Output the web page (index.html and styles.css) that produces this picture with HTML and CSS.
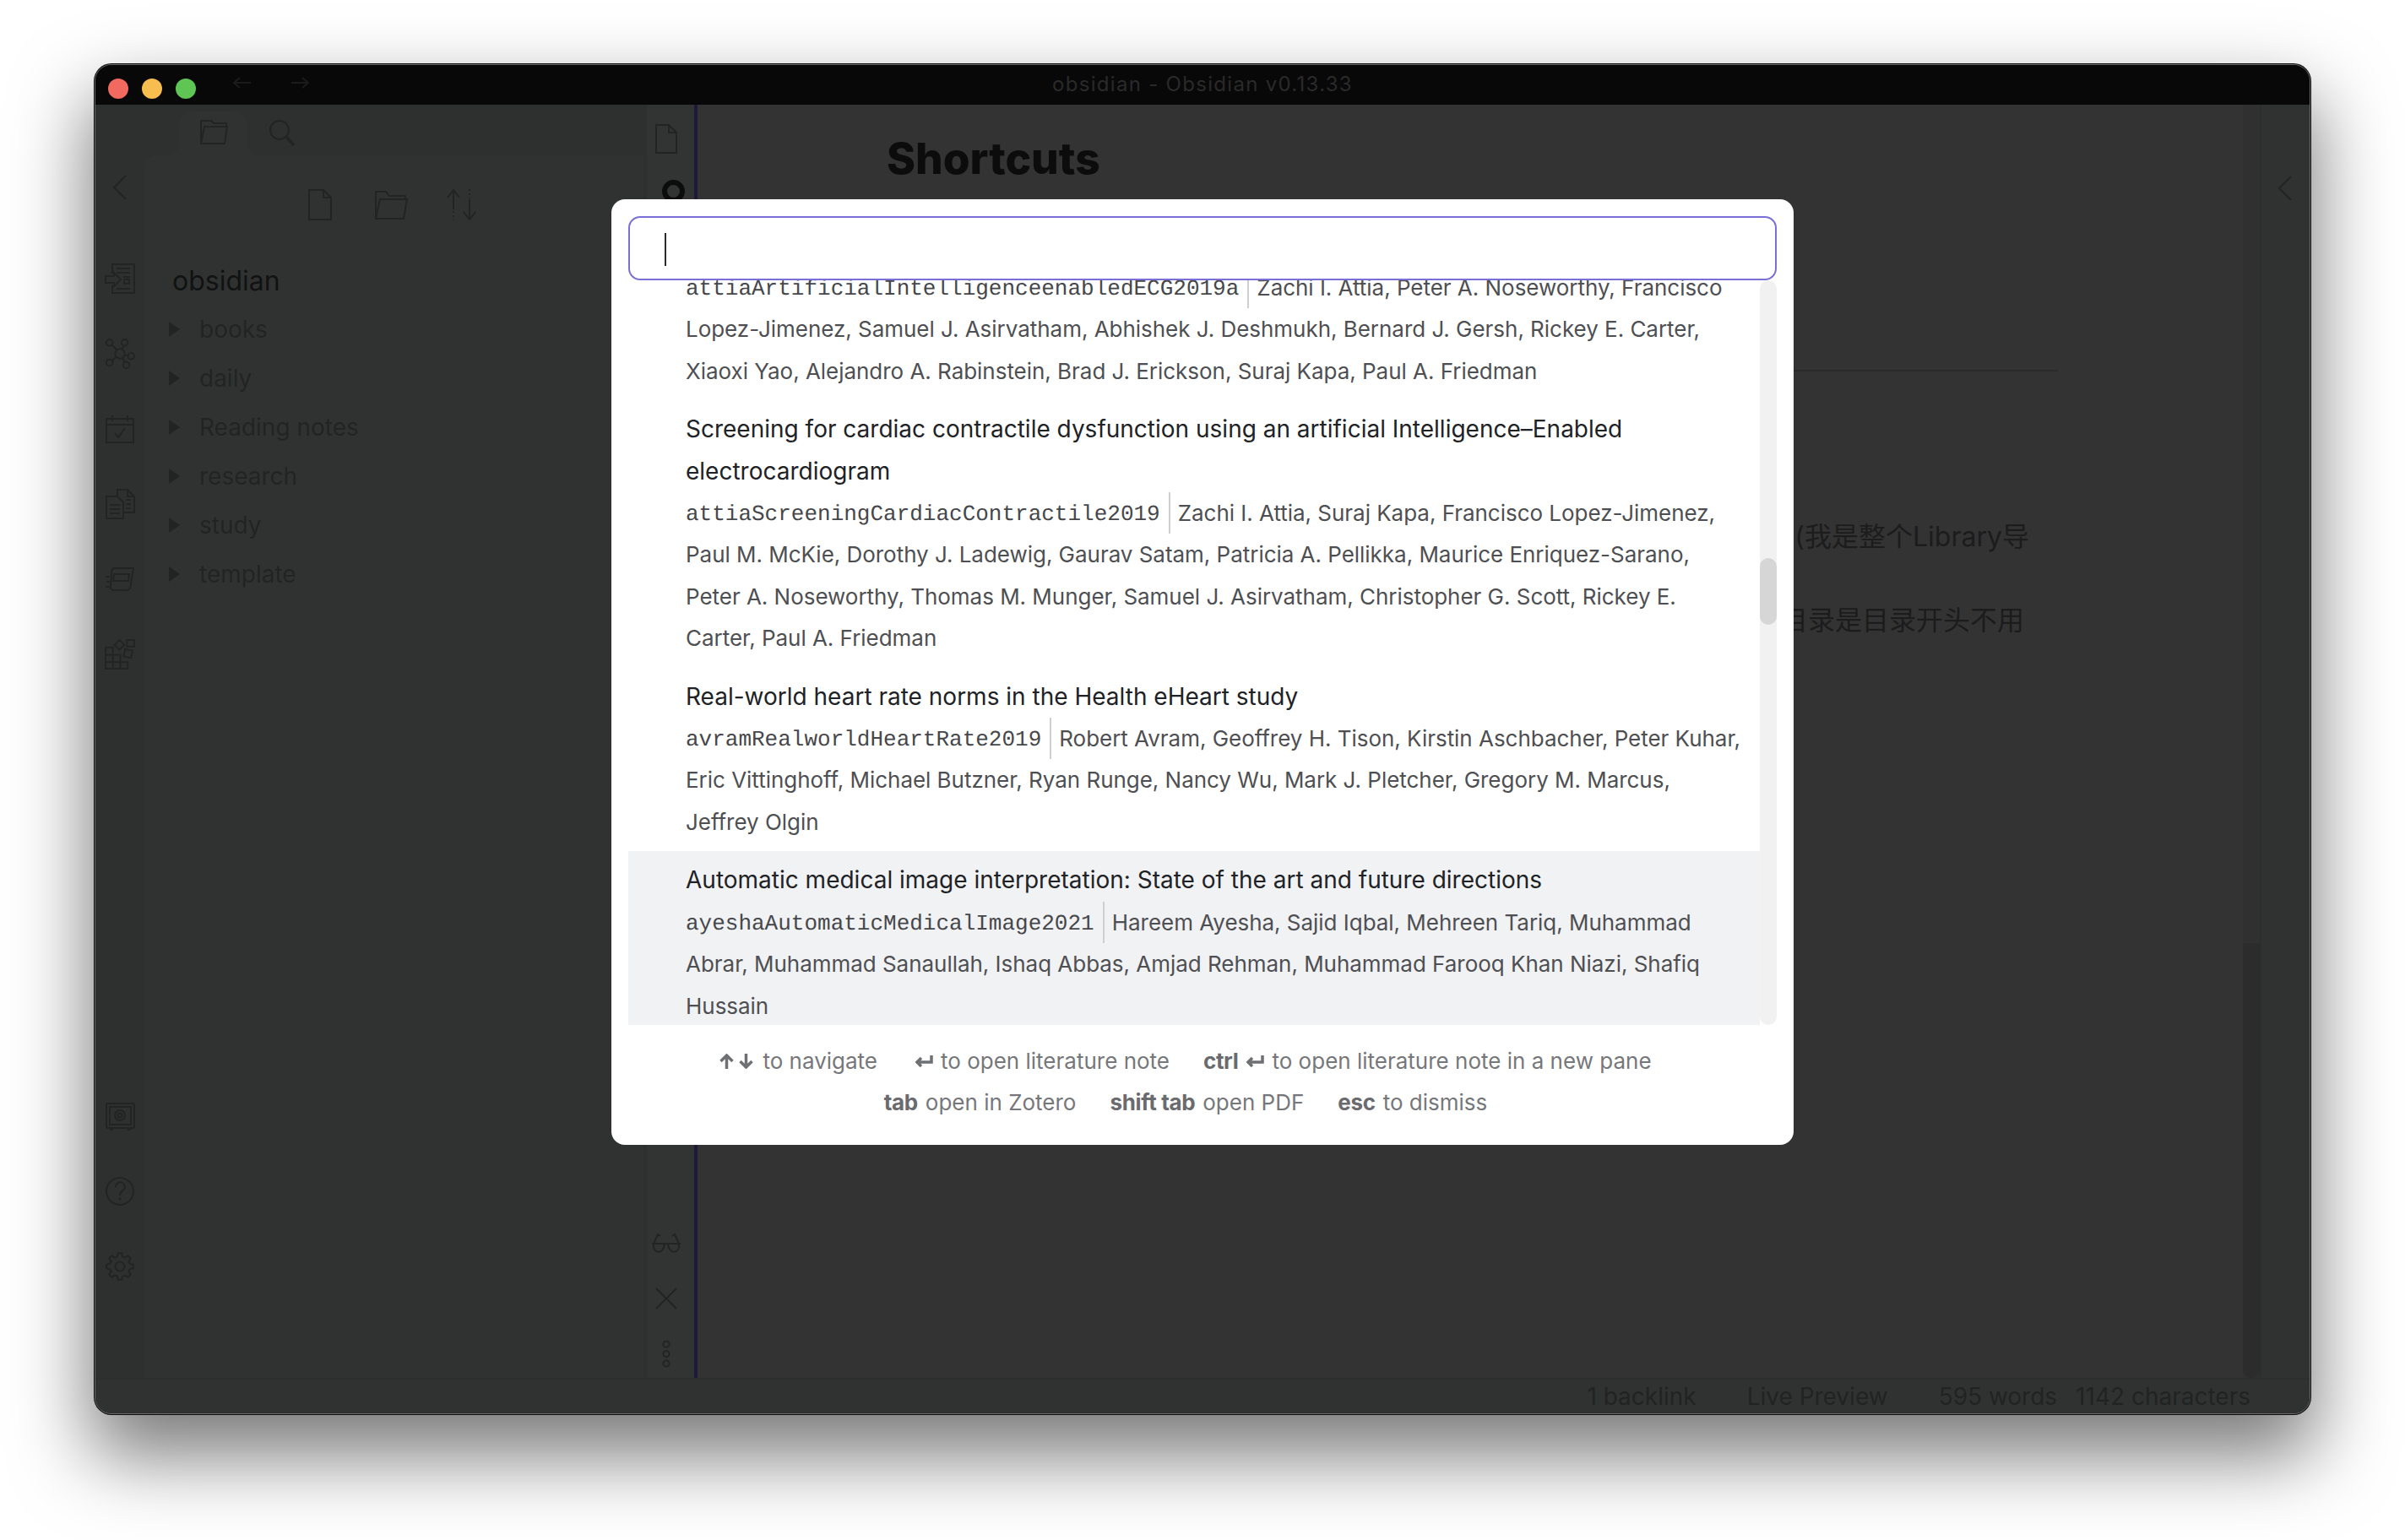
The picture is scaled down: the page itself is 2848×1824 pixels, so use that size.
FILE: index.html
```html
<!DOCTYPE html>
<html lang="en">
<head>
<meta charset="utf-8">
<title>obsidian - Obsidian v0.13.33</title>
<link rel="stylesheet" href="styles.css">
</head>
<body>
<div class="desktop">
<div class="window">
  <header class="titlebar">
    <div class="lights"><span class="light red"></span><span class="light yellow"></span><span class="light green"></span></div>
    <div class="nav">
      <svg class="ic" width="21" height="14" viewBox="0 0 21 14"><path d="M21 7H1M8 1L1 7L8 13"/></svg>
      <svg class="ic" width="21" height="14" viewBox="0 0 21 14"><path d="M0 7H20M13 1L20 7L13 13"/></svg>
    </div>
    <div class="app-title">obsidian - Obsidian v0.13.33</div>
  </header>

  <div class="main">
    <nav class="ribbon">
      <div class="ribbon-group">
        <svg class="ic chevron" width="36" height="36" viewBox="0 0 36 36"><path d="M25 4L11 18L25 32"/></svg>
        <svg class="ic" width="36" height="36" viewBox="0 0 36 36"><path d="M9 12V1H35V35H9V26M1 15H11V11L19 19L11 27V23H1ZM14 6H30M14 11H30M22 16H30M23 19H29V24H23ZM14 30H30"/></svg>
        <svg class="ic" width="36" height="36" viewBox="0 0 36 38"><circle cx="18" cy="19" r="6"/><circle cx="5" cy="5" r="4"/><circle cx="24" cy="5" r="4"/><circle cx="32" cy="22" r="4"/><circle cx="5" cy="30" r="4"/><circle cx="26" cy="33" r="4"/><path d="M8 8L14 14M23 9L20 13M28 21H24M8 28L13 23M24 29L21 24"/></svg>
        <svg class="ic" width="36" height="36" viewBox="0 0 36 36"><path d="M2 6H34V34H2ZM2 13H34M9 2V9M27 2V9M12 23L16 28L24 17"/></svg>
        <svg class="ic" width="36" height="36" viewBox="0 0 36 36"><path d="M15 9V1H27L35 9V28H22M27 1V9H35M2 9H15L22 16V35H2ZM6 19H18M6 24H18M6 29H18M25 13H31M25 18H31M25 23H31"/></svg>
        <svg class="ic" width="36" height="36" viewBox="0 0 36 30"><path d="M8 6L10 2H34L30 26L27 28H10L7 26ZM11 9H29L28 17H10ZM1 12H6M2 18H6M1 24H6"/></svg>
        <svg class="ic" width="36" height="36" viewBox="0 0 37 37"><path d="M1 10H10V19H19V28H28V36H1ZM1 19H10M1 28H19M10 19V36M19 28V36M18 1L24 7L18 13L12 7ZM27 1H36V9H27ZM25 12L34 14L32 23L23 21Z"/></svg>
      </div>
      <div class="ribbon-group">
        <svg class="ic" width="36" height="36" viewBox="0 0 36 36"><rect x="2" y="3" width="33" height="29" rx="2"/><rect x="6" y="7" width="25" height="21"/><circle cx="18" cy="17" r="6"/><circle cx="18" cy="17" r="2.5"/><path d="M6 34H10M27 34H31"/></svg>
        <svg class="ic" width="36" height="36" viewBox="0 0 36 36"><circle cx="18" cy="18" r="16"/><path d="M13 13C13 5 24 6 24 13C24 17 18 17 18 23"/><circle cx="18" cy="27" r=".6"/></svg>
        <svg class="ic" width="36" height="36" viewBox="-18 -18 36 36"><g><path d="M-3.1-11.6L-2.2-15.8H2.2L3.1-11.6A12 12 0 0 1 6-10.4"/><path transform="rotate(45)" d="M-3.1-11.6L-2.2-15.8H2.2L3.1-11.6A12 12 0 0 1 6-10.4"/><path transform="rotate(90)" d="M-3.1-11.6L-2.2-15.8H2.2L3.1-11.6A12 12 0 0 1 6-10.4"/><path transform="rotate(135)" d="M-3.1-11.6L-2.2-15.8H2.2L3.1-11.6A12 12 0 0 1 6-10.4"/><path transform="rotate(180)" d="M-3.1-11.6L-2.2-15.8H2.2L3.1-11.6A12 12 0 0 1 6-10.4"/><path transform="rotate(225)" d="M-3.1-11.6L-2.2-15.8H2.2L3.1-11.6A12 12 0 0 1 6-10.4"/><path transform="rotate(270)" d="M-3.1-11.6L-2.2-15.8H2.2L3.1-11.6A12 12 0 0 1 6-10.4"/><path transform="rotate(315)" d="M-3.1-11.6L-2.2-15.8H2.2L3.1-11.6A12 12 0 0 1 6-10.4"/></g><circle r="5.5"/></svg>
      </div>
    </nav>

    <aside class="sidebar">
      <div class="side-tabs">
        <div class="side-tab active">
          <svg class="ic" width="34" height="30" viewBox="0 0 34 30"><path d="M2 29V2H14L17 5H32V9M2 29L6 9H33L30 29Z"/></svg>
        </div>
        <div class="side-tab">
          <svg class="ic" width="32" height="32" viewBox="0 0 32 32"><circle cx="13" cy="13" r="11"/><path class="thick" d="M21 21L30 31"/></svg>
        </div>
      </div>
      <div class="side-body">
        <div class="actions">
          <svg class="ic" width="28" height="37" viewBox="0 0 28 37"><path d="M1 1H18L27 10V36H1ZM18 1V10H27"/></svg>
          <svg class="ic" width="40" height="35" viewBox="0 0 40 35"><path d="M2 34V2H14L18 7H37V11M2 34L7 11H39L35 34Z"/></svg>
          <svg class="ic sort" width="36" height="37" viewBox="0 0 36 37"><path d="M8 24V1M1 10L8 1L15 10M27 12V36M20 27L27 36L34 27"/><path class="dash" d="M8 26V37M27 0V11"/></svg>
        </div>
        <div class="tree">
          <div class="tree-root">obsidian</div>
          <div class="tree-row"><span class="caret"></span>books</div>
          <div class="tree-row"><span class="caret"></span>daily</div>
          <div class="tree-row"><span class="caret"></span>Reading notes</div>
          <div class="tree-row"><span class="caret"></span>research</div>
          <div class="tree-row"><span class="caret"></span>study</div>
          <div class="tree-row"><span class="caret"></span>template</div>
        </div>
      </div>
    </aside>

    <div class="rail">
      <div class="rail-group">
        <svg class="ic" width="26" height="35" viewBox="0 0 26 35"><path d="M1 1H16L25 10V34H1ZM16 1V10H25"/></svg>
        <svg class="ring" width="27" height="27" viewBox="0 0 27 27"><circle cx="13.5" cy="13.5" r="10.5"/></svg>
      </div>
      <div class="rail-group low">
        <svg class="ic glasses" width="36" height="25" viewBox="0 0 36 25"><path d="M1 13H35M3 13C1 25 15 27 16 13M20 13C21 27 35 25 33 13M16 14Q18 12 20 14M3 13L8 2L11 4M33 13L28 2L25 4"/></svg>
        <svg class="ic" width="26" height="26" viewBox="0 0 26 26"><path d="M1 1L25 25M25 1L1 25"/></svg>
        <svg class="ic dots" width="10" height="33" viewBox="0 0 10 33"><circle cx="5" cy="5" r="3.600"/><circle cx="5" cy="16.500" r="3.600"/><circle cx="5" cy="28" r="3.600"/></svg>
      </div>
    </div>

    <main class="content">
      <h1 class="doc-title">Shortcuts</h1>
      <hr class="doc-rule">
      <p class="doc-line first">(我是整个Library导</p>
      <p class="doc-line second">目录是目录开头不用</p>
    </main>

    <div class="gutter"><div class="gutter-thumb"></div></div>

    <aside class="right-ribbon">
      <svg class="ic" width="20" height="30" viewBox="0 0 20 30"><path d="M17 1L3 15L17 29"/></svg>
    </aside>
  </div>

  <footer class="statusbar">
    <span class="stat backlink">1 backlink</span>
    <span class="stat preview">Live Preview</span>
    <span class="stat words">595 words</span>
    <span class="stat">1142 characters</span>
  </footer>

  <div class="modal">
    <div class="search"><span class="cursor"></span></div>
    <div class="results">
      <div class="list">
        <div class="item first-item">
          <div class="authors"><span class="key">attiaArtificialIntelligenceenabledECG2019a</span>Zachi I. Attia, Peter A. Noseworthy, Francisco Lopez-Jimenez, Samuel J. Asirvatham, Abhishek J. Deshmukh, Bernard J. Gersh, Rickey E. Carter, Xiaoxi Yao, Alejandro A. Rabinstein, Brad J. Erickson, Suraj Kapa, Paul A. Friedman</div>
        </div>
        <div class="item">
          <div class="item-title">Screening for cardiac contractile dysfunction using an artificial Intelligence–Enabled electrocardiogram</div>
          <div class="authors"><span class="key">attiaScreeningCardiacContractile2019</span>Zachi I. Attia, Suraj Kapa, Francisco Lopez-Jimenez, Paul M. McKie, Dorothy J. Ladewig, Gaurav Satam, Patricia A. Pellikka, Maurice Enriquez-Sarano, Peter A. Noseworthy, Thomas M. Munger, Samuel J. Asirvatham, Christopher G. Scott, Rickey E. Carter, Paul A. Friedman</div>
        </div>
        <div class="item">
          <div class="item-title">Real-world heart rate norms in the Health eHeart study</div>
          <div class="authors"><span class="key">avramRealworldHeartRate2019</span>Robert Avram, Geoffrey H. Tison, Kirstin Aschbacher, Peter Kuhar, Eric Vittinghoff, Michael Butzner, Ryan Runge, Nancy Wu, Mark J. Pletcher, Gregory M. Marcus, Jeffrey Olgin</div>
        </div>
        <div class="item selected">
          <div class="item-title">Automatic medical image interpretation: State of the art and future directions</div>
          <div class="authors"><span class="key">ayeshaAutomaticMedicalImage2021</span>Hareem Ayesha, Sajid Iqbal, Mehreen Tariq, Muhammad Abrar, Muhammad Sanaullah, Ishaq Abbas, Amjad Rehman, Muhammad Farooq Khan Niazi, Shafiq Hussain</div>
        </div>
      </div>
      <div class="track"><div class="thumb"></div></div>
    </div>
    <div class="hints">
      <div class="hint-row">
        <span class="hint nav-hint"><svg class="kb" width="40" height="18" viewBox="0 0 40 18"><path d="M8.500 18V2M1.500 9L8.500 2L15.500 9M31.500 0V16M24.500 9L31.500 16L38.500 9"/></svg>to navigate</span>
        <span class="hint"><svg class="kb" width="22" height="14" viewBox="0 0 22 14"><path d="M20 0V8H3M8 3L3 8L8 13"/></svg>to open literature note</span>
        <span class="hint"><b>ctrl</b><svg class="kb" width="22" height="14" viewBox="0 0 22 14"><path d="M20 0V8H3M8 3L3 8L8 13"/></svg>to open literature note in a new pane</span>
      </div>
      <div class="hint-row">
        <span class="hint"><b>tab</b>open in Zotero</span>
        <span class="hint"><b>shift tab</b>open PDF</span>
        <span class="hint"><b>esc</b>to dismiss</span>
      </div>
    </div>
  </div>
</div>
</div>
</body>
</html>
```
FILE: styles.css
```css
* { box-sizing: border-box; }
html, body { margin: 0; padding: 0; }
body { background: #ffffff; font-family: "Inter", "Noto Sans CJK SC", sans-serif; }

.desktop { width: 2848px; height: 1824px; padding: 76px 0 0 112px; overflow: hidden; }

.window {
  position: relative;
  width: 2624px;
  height: 1599px;
  display: flex;
  flex-direction: column;
  border: 1px solid #6a6a6a;
  border-radius: 20px;
  background: #333333;
  box-shadow: 0 0 0 1px #0c0c0c, 0 44px 90px 6px rgba(0, 0, 0, .52);
  overflow: hidden;
}

/* title bar */
.titlebar { position: relative; flex: none; height: 47px; background: #080808; display: flex; align-items: center; }
.lights { display: flex; gap: 16px; margin: 8px 0 0 15px; }
.light { width: 24px; height: 24px; border-radius: 50%; }
.red { background: #f2695f; }
.yellow { background: #f7bd4f; }
.green { background: #5fc554; }
.nav { display: flex; gap: 48px; margin: -6px 0 0 44px; }
.nav .ic { stroke: #1b1b1b; }
.app-title { position: absolute; left: 0; right: 0; top: 8px; text-align: center; font-size: 24px; line-height: 30px; letter-spacing: 1.3px; color: #2a2a2a; }

/* shared icon stroke */
.ic { display: block; fill: none; stroke: #222424; stroke-width: 2; flex: none; }
.ic .thick { stroke-width: 3.5; }
.ic .dash { stroke-dasharray: 2 3; }

.main { flex: 1; min-height: 0; display: flex; }

/* left ribbon */
.ribbon { flex: none; width: 58px; background: #2e302f; display: flex; flex-direction: column; justify-content: space-between; align-items: center; padding: 80px 0 114px; }
.ribbon-group { display: flex; flex-direction: column; gap: 53px; }
.chevron { margin-bottom: 19px; }

/* file sidebar */
.sidebar { flex: none; width: 591px; display: flex; flex-direction: column; background: #2e302f; }
.side-tabs { flex: none; height: 60px; display: flex; padding: 8px 0 0 41px; }
.side-tab { position: relative; width: 81px; height: 52px; display: flex; justify-content: center; padding-top: 9px; }
.side-tab.active { background: #303231; border-radius: 16px 16px 0 0; }
.side-tab.active::before, .side-tab.active::after { content: ""; position: absolute; bottom: 0; width: 14px; height: 14px; }
.side-tab.active::before { left: -14px; background: radial-gradient(circle at 0 0, transparent 14px, #303231 14.500px); }
.side-tab.active::after { right: -14px; background: radial-gradient(circle at 100% 0, transparent 14px, #303231 14.500px); }
.side-body { flex: 1; background: #303231; border-radius: 14px 0 0 0; }
.actions { display: flex; justify-content: center; align-items: center; gap: 50px; margin-top: 40px; height: 37px; padding-right: 4px; }
.sort { margin-left: -4px; }
.tree { margin-top: 43px; padding-left: 33px; }
.tree-root { font-size: 32px; line-height: 58px; color: #111212; }
.tree-row { display: flex; align-items: center; height: 58px; font-size: 28px; color: #222424; transform: translateY(-1px); }
.caret { width: 0; height: 0; border-style: solid; border-width: 9px 0 9px 13px; border-color: transparent transparent transparent #222424; margin: 0 23px 0 -4px; }

/* pane action rail */
.rail { flex: none; width: 64px; background: #323433; border-left: 4px solid #2e302f; border-right: 4px solid #1c1a38; display: flex; flex-direction: column; justify-content: space-between; align-items: center; padding: 23px 10px 12px 0; }
.rail-group { display: flex; flex-direction: column; align-items: center; }
.ring { display: block; margin: 31px 0 0 16px; fill: none; stroke: #0c0c0c; stroke-width: 6; }
.low { gap: 38px; }
.low .glasses { margin-bottom: 2px; }
.low .dots { margin-top: -2px; }

/* editor */
.content { flex: 1; min-width: 0; background: #333333; padding: 33px 0 0 224px; }
.doc-title { margin: 0; font-size: 51.500px; line-height: 60px; font-weight: 800; color: #0c0c0c; }
.doc-rule { width: 1387px; height: 2px; margin: 221px 0 0; border: 0; background: #2b2b2b; }
.doc-line { width: 1387px; margin: 0; font-size: 32px; line-height: 50px; color: #1c1c1c; text-align: right; }
.doc-line.first { margin-top: 171px; padding-right: 34px; }
.doc-line.second { margin-top: 49px; padding-right: 40px; }
.gutter { flex: none; width: 20px; background: #303030; display: flex; flex-direction: column; justify-content: flex-end; }
.gutter-thumb { height: 515px; background: #2c2c2c; border-radius: 0 0 10px 10px; }
.right-ribbon { flex: none; width: 59px; background: #2f3231; border-left: 2px solid #2c2e2d; padding: 84px 0 0 18px; }

/* status bar */
.statusbar { flex: none; height: 42px; background: #303231; border-top: 2px solid #2d2f2e; display: flex; justify-content: flex-end; align-items: center; padding-right: 70px; font-size: 28px; line-height: 34px; color: #212323; }
.backlink { margin-right: 60px; }
.preview { margin-right: 60px; }
.words { margin-right: 22px; }

/* modal */
.modal { position: absolute; left: 611px; top: 159px; width: 1400px; height: 1120px; padding: 20px; background: #ffffff; border-radius: 16px; display: flex; flex-direction: column; }
.search { position: relative; z-index: 1; flex: none; height: 76px; border: 2px solid #7a6fd6; border-radius: 14px; background: #ffffff; padding: 18px 0 0 41px; }
.cursor { display: block; width: 2px; height: 39px; background: #2a2a2e; }
.results { flex: none; height: 882px; display: flex; }
.list { flex: 1; min-width: 0; overflow: hidden; }
.item { padding: 10px 22px 10px 68px; font-size: 28px; line-height: 49.400px; }
.first-item { margin-top: -26px; }
.item-title { color: #202226; }
.authors { color: #4e4f53; font-size: 26px; letter-spacing: -0.03px; }
.key { display: inline-block; font-family: "Liberation Mono", monospace; font-size: 26px; letter-spacing: 0; text-rendering: geometricPrecision; height: 49.400px; line-height: 52px; padding-right: 10px; margin-right: 9px; border-right: 2px solid #cfcfcf; vertical-align: top; color: #46474b; }
.selected { background: #f1f2f4; }
.track { flex: none; width: 20px; height: 882px; background: #f1f1f1; border-radius: 10px; padding-top: 329px; }
.thumb { height: 79px; background: #d6d6d6; border-radius: 10px; }

.hints { flex: 1; padding: 18px 40px 0 0; display: flex; flex-direction: column; align-items: center; font-size: 26px; line-height: 49px; color: #76777b; }
.hint-row { display: flex; gap: 40px; }
.hint { display: flex; align-items: center; gap: 9px; }
.nav-hint { margin-right: 4px; gap: 11px; }
.hint b { font-weight: 700; color: #6a6b6f; letter-spacing: -0.35px; }
.kb { display: block; fill: none; stroke: #6f7074; stroke-width: 3.500; flex: none; }
```
